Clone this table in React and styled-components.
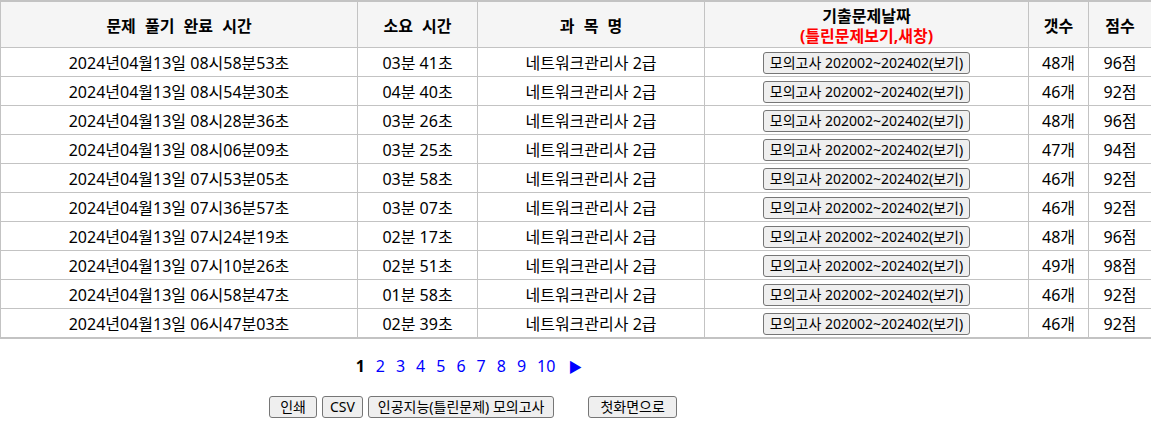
import React from "react";
import styled, { createGlobalStyle } from "styled-components";

const GlobalStyle = createGlobalStyle`
  html, body {
    margin: 0;
    padding: 0;
    background: #fff;
  }
  body {
    font-family: "Noto Sans", "Noto Sans CJK KR", sans-serif;
    font-size: 16px;
    color: #000;
  }
`;

const Page = styled.div`
  width: 1151px;
`;

const Table = styled.table`
  width: 1151px;
  border-collapse: collapse;
  table-layout: fixed;
  border-top: 2px solid #c3c3c3;
  border-bottom: 2px solid #c3c3c3;
  border-left: 1px solid #c3c3c3;
`;

const HeadCell = styled.th`
  height: 43px;
  padding: 2px 0 0;
  background: #f5f5f5;
  font-weight: bold;
  font-size: 16px;
  word-spacing: 5px;
  text-align: center;
  border: 1px solid #c3c3c3;
  border-top: none;
  line-height: 20px;
`;

const Red = styled.span`
  color: #ff0000;
`;

const Cell = styled.td`
  height: 28px;
  padding: 0;
  text-align: center;
  font-size: 16px;
  border: 1px solid #c3c3c3;
  white-space: nowrap;
`;

const Button = styled.button`
  font-family: "Noto Sans", "Noto Sans CJK KR", sans-serif;
  font-size: 14px;
  height: 22px;
  padding: 0 ${(p) => p.$pad ?? 7}px;
  background: #efefef;
  border: 1px solid #767676;
  border-radius: 3px;
  color: #000;
  line-height: 18px;
`;

const Below = styled.div`
  width: 946px;
  display: flex;
  flex-direction: column;
  align-items: center;
`;

const Pager = styled.div`
  display: flex;
  align-items: center;
  margin-top: 16px;
  margin-right: 11px;
  font-size: 16px;
  height: 22px;
`;

const PageNum = styled.span`
  display: inline-block;
  padding: 0 3px;
  margin-left: ${(p) => (p.$first ? 0 : 5)}px;
  color: ${(p) => (p.$current ? "#000" : "#0000ff")};
  font-weight: ${(p) => (p.$current ? "bold" : "normal")};
`;

const Arrow = styled.span`
  margin-left: 10px;
  color: #0000ff;
  font-size: 14px;
`;

const Actions = styled.div`
  display: flex;
  align-items: center;
  margin-top: 19px;
  gap: 5px;
`;

const Spacer = styled.span`
  width: 24px;
`;

const rows = [
  ["2024년04월13일 08시58분53초", "03분 41초", "48개", "96점"],
  ["2024년04월13일 08시54분30초", "04분 40초", "46개", "92점"],
  ["2024년04월13일 08시28분36초", "03분 26초", "48개", "96점"],
  ["2024년04월13일 08시06분09초", "03분 25초", "47개", "94점"],
  ["2024년04월13일 07시53분05초", "03분 58초", "46개", "92점"],
  ["2024년04월13일 07시36분57초", "03분 07초", "46개", "92점"],
  ["2024년04월13일 07시24분19초", "02분 17초", "48개", "96점"],
  ["2024년04월13일 07시10분26초", "02분 51초", "49개", "98점"],
  ["2024년04월13일 06시58분47초", "01분 58초", "46개", "92점"],
  ["2024년04월13일 06시47분03초", "02분 39초", "46개", "92점"],
];

export default function App() {
  return (
    <Page>
      <GlobalStyle />
      <Table>
        <colgroup>
          <col style={{ width: 357 }} />
          <col style={{ width: 120 }} />
          <col style={{ width: 227 }} />
          <col style={{ width: 324 }} />
          <col style={{ width: 60 }} />
          <col style={{ width: 63 }} />
        </colgroup>
        <thead>
          <tr>
            <HeadCell>문제 풀기 완료 시간</HeadCell>
            <HeadCell>소요 시간</HeadCell>
            <HeadCell>과 목 명</HeadCell>
            <HeadCell>
              기출문제날짜
              <br />
              <Red>(틀린문제보기,새창)</Red>
            </HeadCell>
            <HeadCell>갯수</HeadCell>
            <HeadCell>점수</HeadCell>
          </tr>
        </thead>
        <tbody>
          {rows.map((r, i) => (
            <tr key={i}>
              <Cell>{r[0]}</Cell>
              <Cell>{r[1]}</Cell>
              <Cell>네트워크관리사 2급</Cell>
              <Cell>
                <Button $pad={6}>모의고사 202002~202402(보기)</Button>
              </Cell>
              <Cell>{r[2]}</Cell>
              <Cell>{r[3]}</Cell>
            </tr>
          ))}
        </tbody>
      </Table>
      <Below>
        <Pager>
          {[1, 2, 3, 4, 5, 6, 7, 8, 9, 10].map((n) => (
            <PageNum key={n} $first={n === 1} $current={n === 1}>
              {n}
            </PageNum>
          ))}
          <Arrow>▶</Arrow>
        </Pager>
        <Actions>
          <Button $pad={10}>인쇄</Button>
          <Button $pad={7}>CSV</Button>
          <Button $pad={9}>인공지능(틀린문제) 모의고사</Button>
          <Spacer />
          <Button $pad={11}>첫화면으로</Button>
        </Actions>
      </Below>
    </Page>
  );
}
